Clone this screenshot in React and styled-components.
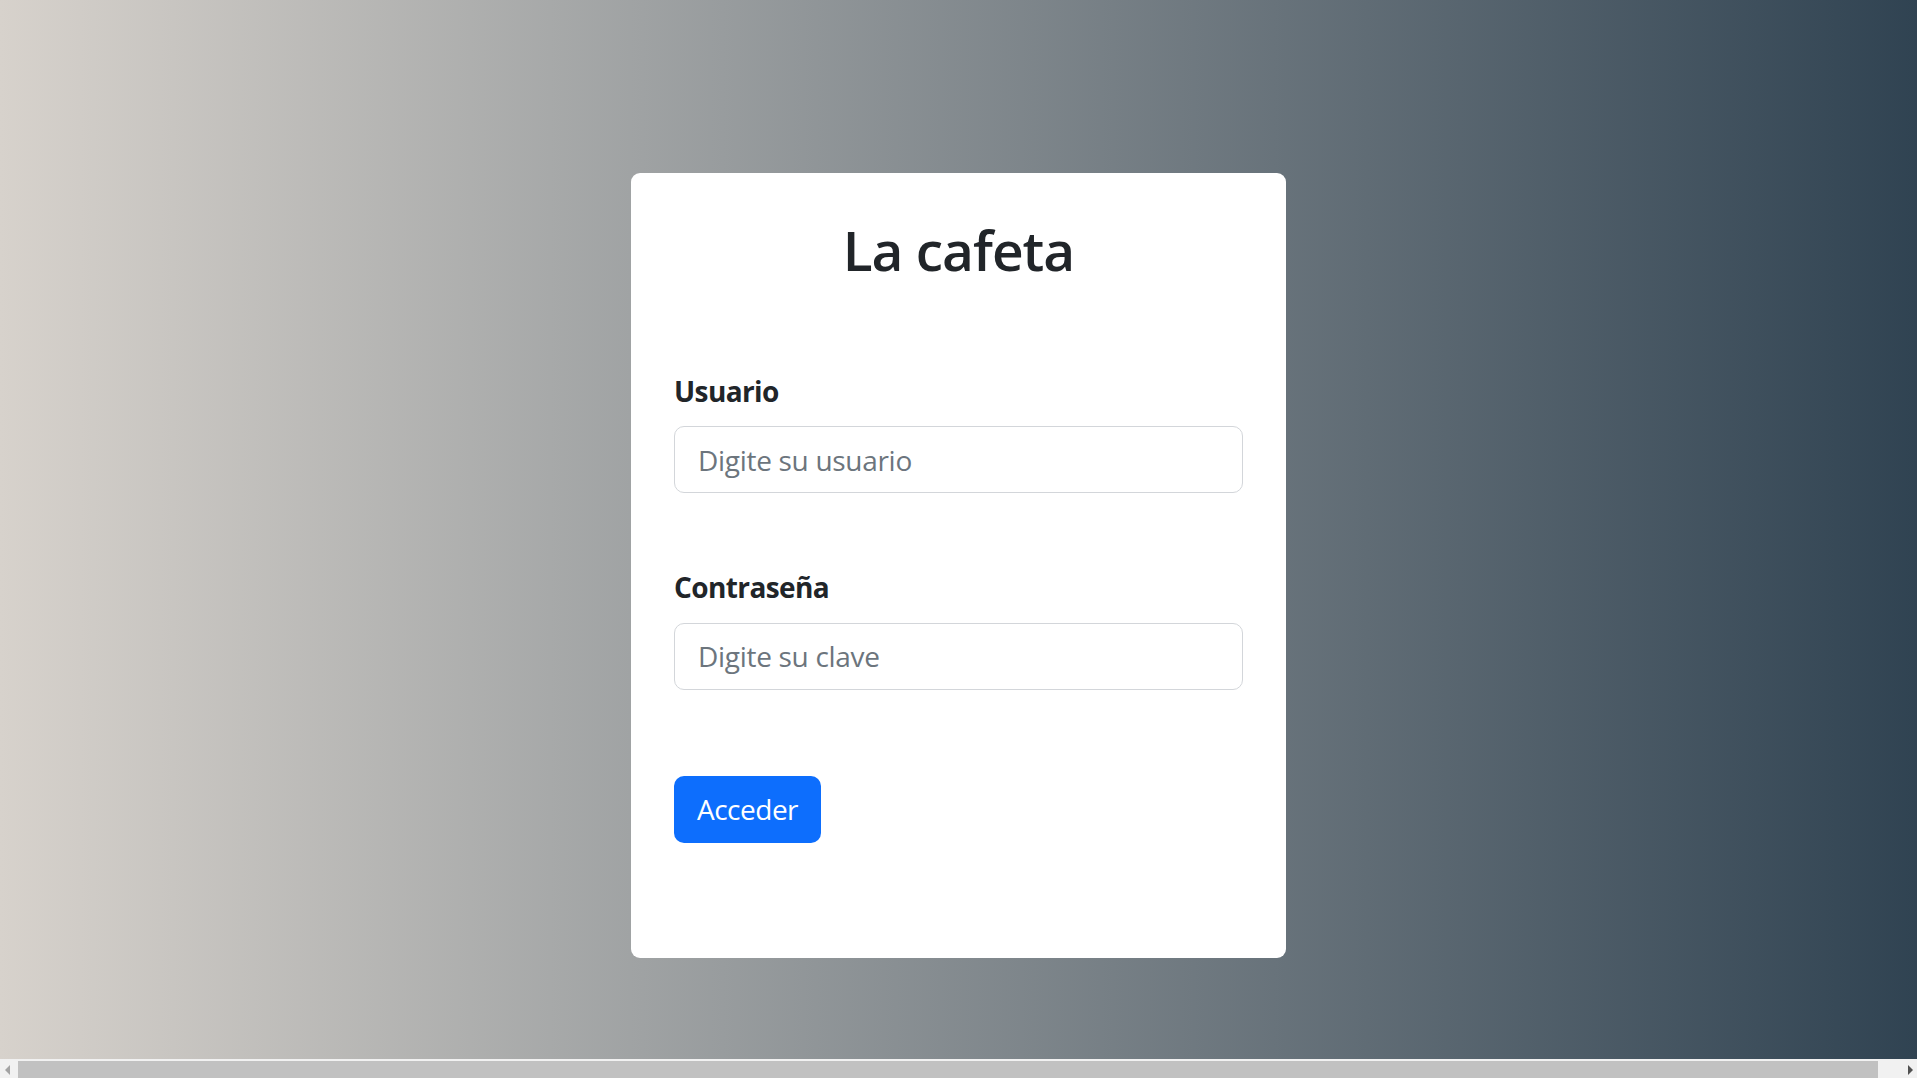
import styled, { createGlobalStyle } from "styled-components";

const GlobalStyle = createGlobalStyle`
  html, body, #root {
    height: 100%;
  }
  body {
    margin: 0;
    overflow: hidden;
    font-family: "Open Sans", "Noto Sans", sans-serif;
    color: #212529;
  }
  * {
    box-sizing: border-box;
  }
`;

const Page = styled.div`
  height: 100%;
  display: flex;
  flex-direction: column;
`;

const Canvas = styled.main`
  flex: 1;
  display: flex;
  justify-content: center;
  align-items: flex-start;
  padding-top: 173px;
  background: linear-gradient(to right, #d7d2cc, #304352);
`;

const Card = styled.section`
  width: 655px;
  background: #fff;
  border-radius: 9px;
  padding: 44px 43px;
  display: flex;
  flex-direction: column;
`;

const Title = styled.h1`
  margin: 0 0 87px;
  font-size: 55px;
  font-weight: 600;
  letter-spacing: -1px;
  line-height: 1.2;
  text-align: center;
  color: #212529;
`;

const Field = styled.div`
  display: flex;
  flex-direction: column;
  margin-bottom: ${(p) => p.$gap}px;
`;

const Label = styled.label`
  font-size: 28px;
  font-weight: 700;
  letter-spacing: -0.6px;
  line-height: 1.55;
  margin-bottom: 13px;
`;

const Input = styled.input`
  height: 67px;
  width: 100%;
  padding: 0 23px;
  font-family: inherit;
  font-size: 28px;
  letter-spacing: -0.3px;
  color: #212529;
  border: 1px solid #d3d6da;
  border-radius: 10px;
  background: #fff;
  outline: none;

  &::placeholder {
    color: #6c757d;
  }
`;

const Actions = styled.div`
  display: flex;
  padding-bottom: 71px;
`;

const Button = styled.button`
  height: 67px;
  padding: 0 23px;
  font-family: inherit;
  font-size: 28px;
  letter-spacing: -0.5px;
  color: #fff;
  background: #0d6efd;
  border: none;
  border-radius: 10px;
  cursor: pointer;
`;

const ScrollBar = styled.div`
  height: 19px;
  flex-shrink: 0;
  display: flex;
  background: #f1f1f1;
  padding-top: 2px;
`;

const Arrow = styled.div`
  width: 17px;
  display: flex;
  align-items: center;
  justify-content: center;

  &::before {
    content: "";
    border-top: 5px solid transparent;
    border-bottom: 5px solid transparent;
    ${(p) =>
      p.$dir === "left"
        ? "border-right: 5px solid #a3a3a3; margin-left: -2px;"
        : "border-left: 5px solid #505050; margin-left: 4px;"}
  }
`;

const Track = styled.div`
  flex: 1;
  display: flex;
  padding: 0 22px 0 1px;
`;

const Thumb = styled.div`
  flex: 1;
  background: #c1c1c1;
`;

export default function App() {
  return (
    <>
      <GlobalStyle />
      <Page>
        <Canvas>
          <Card>
            <Title>La cafeta</Title>
            <Field $gap={73}>
              <Label htmlFor="usuario">Usuario</Label>
              <Input id="usuario" type="text" placeholder="Digite su usuario" />
            </Field>
            <Field $gap={86}>
              <Label htmlFor="clave">Contraseña</Label>
              <Input id="clave" type="password" placeholder="Digite su clave" />
            </Field>
            <Actions>
              <Button type="button">Acceder</Button>
            </Actions>
          </Card>
        </Canvas>
        <ScrollBar>
          <Arrow $dir="left" />
          <Track>
            <Thumb />
          </Track>
          <Arrow $dir="right" />
        </ScrollBar>
      </Page>
    </>
  );
}
